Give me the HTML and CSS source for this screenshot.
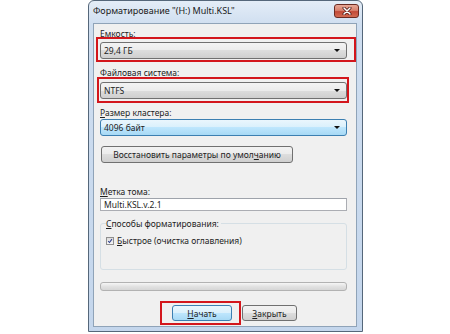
FILE: index.html
```html
<!DOCTYPE html>
<html lang="ru">
<head>
<meta charset="utf-8">
<title>Форматирование</title>
<link rel="stylesheet" href="styles.css">
</head>
<body>
<div class="window">
  <div class="titlebar">
    <span class="title">Форматирование "(H:) Multi.KSL"</span>
    <span class="close"><svg width="10" height="8" viewBox="0 0 10 8"><path d="M2 1 L8 7 M8 1 L2 7" stroke="#4a1410" stroke-width="3" stroke-linecap="round"/><path d="M2 1 L8 7 M8 1 L2 7" stroke="#fff" stroke-width="1.5" stroke-linecap="round"/></svg></span>
  </div>
  <div class="client">
    <div class="label l1"><u>Е</u>мкость:</div>
    <div class="combo gray c1 marked mark-a"><span>29,4 ГБ</span><i class="arrow"></i></div>
    <div class="label l2"><u>Ф</u>айловая система:</div>
    <div class="combo gray c2 marked mark-b"><span>NTFS</span><i class="arrow"></i></div>
    <div class="label l3"><u>Р</u>азмер кластера:</div>
    <div class="combo blue c3"><span>4096 байт</span><i class="arrow"></i></div>
    <div class="btn restore">Восстановить параметры по умол<u>ч</u>анию</div>
    <div class="label l4"><u>М</u>етка тома:</div>
    <div class="textbox">Multi.KSL.v.2.1</div>
    <div class="group">
      <div class="legend"><u>С</u>пособы форматирования:</div>
      <div class="check"><span class="box"><svg width="8" height="8" viewBox="0 0 8 8"><path d="M1.5 4 L3.3 6 L6.6 1.5" stroke="#2c3c8c" stroke-width="1.4" fill="none"/></svg></span><span><u>Б</u>ыстрое (очистка оглавления)</span></div>
    </div>
    <div class="progress"></div>
    <div class="actions">
      <div class="btn default marked mark-c"><u>Н</u>ачать</div>
      <div class="btn close-btn"><u>З</u>акрыть</div>
    </div>
  </div>
</div>
</body>
</html>
```

FILE: styles.css
```css
* { box-sizing: border-box; }
html, body { margin: 0; padding: 0; background: #fff; }
body {
  font-family: "Noto Sans", "Open Sans", sans-serif;
  font-size: 8.5px;
  color: #1e1e1e;
}
u { text-decoration: underline; text-underline-offset: 1px; }

.window {
  margin-left: 88px;
  width: 275px;
  height: 332px;
  border: 1px solid #55677a;
  border-radius: 6px 6px 0 0;
  background: linear-gradient(to bottom, #e4edf7 0px, #cfdef0 24px, #c4d6ec 100%);
  display: flex;
  flex-direction: column;
}

.titlebar {
  height: 22px;
  display: flex;
  align-items: center;
  padding: 0 3px 3px 4px;
}
.title {
  font-size: 9px;
  color: #1a1a1a;
  flex: 1;
}
.close {
  width: 25px;
  height: 14px;
  margin-top: 1px;
  border: 1px solid #6b2b22;
  border-radius: 3px;
  background: linear-gradient(to bottom, #e8a896 0%, #d8826f 45%, #c24a38 55%, #d26b52 100%);
  display: flex;
  align-items: center;
  justify-content: center;
}

.client {
  flex: 1;
  margin: 0 5px 4px 4px;
  background: #f0f0f0;
  border: 1px solid #8fa3b8;
  padding: 3px 9px 0 6px;
  display: flex;
  flex-direction: column;
}

.label { height: 11px; line-height: 11px; }
.l1 { margin-top: 1px; }
.l2 { margin-top: 8px; }
.l3 { margin-top: 8px; }
.l4 { margin-top: 23px; }

.combo {
  height: 17px;
  border-radius: 3px;
  display: flex;
  align-items: center;
  padding: 0 6px 0 3px;
  position: relative;
}
.combo span { flex: 1; }
.gray {
  border: 1px solid #707070;
  background: linear-gradient(to bottom, #f3f3f3 0%, #ebebeb 50%, #dddddd 50%, #cfcfcf 100%);
}
.blue {
  border: 1px solid #3c7fb1;
  background: linear-gradient(to bottom, #eaf6fd 0%, #d9f0fc 50%, #bee6fd 50%, #a7d9f5 100%);
}
.c1 { margin-top: 3px; }
.c2 { margin-top: 4px; }
.c3 { margin-top: 1px; }
.arrow {
  width: 0; height: 0;
  border-left: 3px solid transparent;
  border-right: 3px solid transparent;
  border-top: 3px solid #111;
}

.marked { position: relative; }
.marked::after {
  content: "";
  position: absolute;
  border: 2px solid #d3161c;
  pointer-events: none;
}
.mark-a::after { top: -6px; bottom: -4px; left: -5px; right: -10px; }
.mark-b::after { top: -6px; bottom: -5px; left: -4px; right: -3px; }
.mark-c::after { top: -5px; bottom: -5px; left: -13px; right: -10px; }

.btn {
  height: 17px;
  border: 1px solid #707070;
  border-radius: 3px;
  background: linear-gradient(to bottom, #f2f2f2 0%, #ebebeb 50%, #dddddd 50%, #cfcfcf 100%);
  display: flex;
  align-items: center;
  justify-content: center;
}
.restore {
  margin-top: 10px;
  margin-left: 1px;
  width: 192px;
}

.textbox {
  margin-top: 1px;
  height: 13px;
  background: #fff;
  border: 1px solid #abadb3;
  border-top-color: #9ea3ab;
  padding-left: 3px;
  line-height: 11px;
}

.group {
  margin-top: 12px;
  height: 47px;
  border: 1px solid #d5dfe5;
  border-radius: 3px;
  padding: 0 0 0 5px;
}
.legend {
  margin-top: -6px;
  height: 11px;
  line-height: 11px;
  background: #f0f0f0;
  align-self: flex-start;
  width: max-content;
  padding-right: 2px;
}
.check {
  margin-top: 6px;
  display: flex;
  align-items: center;
  gap: 3px;
  height: 11px;
}
.box {
  width: 8px;
  height: 8px;
  border: 1px solid #8f8f8f;
  background: linear-gradient(#dcdcdc, #f6f6f6);
  display: flex;
  align-items: center;
  justify-content: center;
}
.box svg { display: block; }

.progress {
  margin-top: 12px;
  height: 9px;
  border: 1px solid #b2b2b2;
  border-radius: 3px;
  background: linear-gradient(to bottom, #f6f6f6, #e2e2e2 50%, #d6d6d6);
}

.actions {
  margin-top: 14px;
  display: flex;
  gap: 10px;
  padding-left: 72px;
}
.actions .btn { height: 16px; }
.default {
  width: 60px;
  border-color: #3c7fb1;
  background: linear-gradient(to bottom, #eaf6fd 0%, #d9f0fc 50%, #bee6fd 50%, #a7d9f5 100%);
}
.close-btn { width: 55px; }
```
